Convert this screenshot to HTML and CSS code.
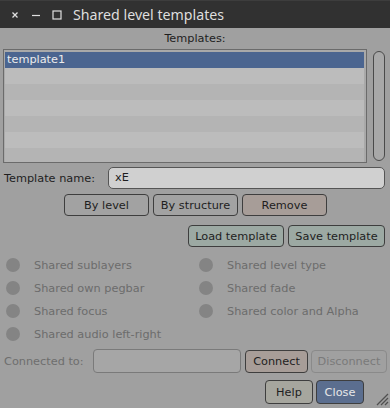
FILE: index.html
```html
<!DOCTYPE html>
<html>
<head>
<meta charset="utf-8">
<link rel="stylesheet" href="styles.css">
</head>
<body>
<div class="window">
  <div class="titlebar">
    <span class="tb-btn"><svg width="10" height="10" viewBox="0 0 10 10"><path d="M2.5 2.5 L7.5 7.5 M7.5 2.5 L2.5 7.5" stroke="#e0e0e0" stroke-width="1.3"/></svg></span>
    <span class="tb-btn"><svg width="10" height="10" viewBox="0 0 10 10"><path d="M1 5.5 H9" stroke="#e0e0e0" stroke-width="1.2"/></svg></span>
    <span class="tb-btn"><svg width="10" height="10" viewBox="0 0 10 10"><rect x="1" y="1" width="8" height="8" fill="none" stroke="#e0e0e0" stroke-width="1.2"/></svg></span>
    <span class="title">Shared level templates</span>
  </div>
  <div class="content">
    <div class="caption">Templates:</div>
    <div class="list-area">
      <div class="list">
        <div class="row sel">template1</div>
        <div class="row a"></div>
        <div class="row b"></div>
        <div class="row a"></div>
        <div class="row b"></div>
        <div class="row a"></div>
        <div class="row b"></div>
      </div>
      <div class="scroll"></div>
    </div>
    <div class="name-row">
      <span class="label">Template name:</span>
      <div class="input">xE</div>
    </div>
    <div class="btn-row center">
      <div class="btn w85">By level</div>
      <div class="btn w85">By structure</div>
      <div class="btn w85 red">Remove</div>
    </div>
    <div class="btn-row right">
      <div class="btn green w96">Load template</div>
      <div class="btn green w97">Save template</div>
    </div>
    <div class="checks">
      <div class="check"><span class="dot"></span>Shared sublayers</div>
      <div class="check"><span class="dot"></span>Shared level type</div>
      <div class="check"><span class="dot"></span>Shared own pegbar</div>
      <div class="check"><span class="dot"></span>Shared fade</div>
      <div class="check"><span class="dot"></span>Shared focus</div>
      <div class="check"><span class="dot"></span>Shared color and Alpha</div>
      <div class="check"><span class="dot"></span>Shared audio left-right</div>
    </div>
    <div class="connect-row">
      <span class="label dim">Connected to:</span>
      <div class="input dis"></div>
      <div class="btn red connect">Connect</div>
      <div class="btn disabled disconnect">Disconnect</div>
    </div>
    <div class="footer">
      <div class="btn help">Help</div>
      <div class="btn blue close">Close</div>
      <svg class="grip" width="16" height="16" viewBox="0 0 16 16"><path d="M15 4 L4 15 M15 8 L8 15 M15 12 L12 15" stroke="#505050" stroke-width="1.3"/></svg>
    </div>
  </div>
</div>
</body>
</html>
```
FILE: styles.css
```css
* { box-sizing: border-box; }
html, body { margin: 0; padding: 0; }
body {
  width: 390px;
  height: 408px;
  overflow: hidden;
  background: #a0a0a0;
  font-family: "DejaVu Sans", sans-serif;
  font-size: 11.3px;
  color: #1e1e1e;
}
.window { width: 390px; height: 408px; display: flex; flex-direction: column; }
.titlebar {
  height: 28px;
  background: #313131;
  border-top: 1px solid #3d3d3d;
  display: flex;
  align-items: center;
  padding-left: 10px;
}
.tb-btn { width: 10px; height: 10px; display: flex; margin-right: 11px; }
.tb-btn svg { display: block; }
.title {
  color: #dedede;
  font-family: "Noto Sans", sans-serif;
  font-size: 14.2px;
  line-height: 28px;
}
.content { display: flex; flex-direction: column; padding: 0; }
.caption {
  height: 20px;
  line-height: 20px;
  text-align: center;
  margin-top: 1px;
}
.list-area { display: flex; height: 114px; margin-left: 3px; }
.list {
  width: 364px;
  height: 114px;
  border: 1px solid #6b6b6b;
  background: #a9a9a9;
  padding: 2px 2px 0 1px;
  overflow: hidden;
}
.row { height: 16px; line-height: 16px; padding-left: 2px; }
.row.sel { background: #4b6590; color: #ececec; }
.row.a { background: #bcbcbc; }
.row.b { background: #b4b4b4; }
.scroll {
  width: 12px;
  height: 110px;
  margin-top: 2px;
  margin-left: 6px;
  border: 1px solid #4a4a4a;
  border-radius: 6px;
  background: #a8a8a8;
}
.name-row { display: flex; align-items: center; margin-top: 4px; height: 22px; padding-left: 4px; }
.label { width: 104px; }
.input {
  width: 277px;
  height: 22px;
  line-height: 20px;
  background: #d0d0d0;
  border: 1px solid #555;
  border-radius: 5px;
  padding-left: 6px;
}
.btn {
  height: 22px;
  border: 1px solid #3e3e3e;
  border-radius: 4px;
  background: #a2a2a2;
  display: flex;
  align-items: center;
  justify-content: center;
  white-space: nowrap;
}
.btn-row { display: flex; gap: 4px; }
.btn-row.center { justify-content: center; margin-top: 5px; padding-left: 1px; }
.btn-row.right { justify-content: flex-end; margin-top: 9px; padding-right: 5px; }
.w85 { width: 85px; }
.w96 { width: 96px; }
.w97 { width: 97px; }
.red { background: #a79d98; }
.green { background: #9ca9a3; }
.blue { background: #5b6e8f; color: #e8e8e8; }
.checks {
  display: grid;
  grid-template-columns: 193px 1fr;
  row-gap: 9px;
  margin-top: 11px;
  padding-left: 6px;
  color: #6c6c6c;
}
.check { display: flex; align-items: center; height: 14px; }
.dot {
  width: 14px;
  height: 14px;
  border-radius: 50%;
  background: #848484;
  margin-right: 14px;
}
.connect-row { display: flex; align-items: center; margin-top: 8px; padding-left: 4px; height: 24px; }
.label.dim { width: 89px; color: #6e6e6e; }
.input.dis { width: 148px; height: 24px; background: #a6a6a6; border-color: #7a7a7a; border-radius: 4px; }
.connect { width: 63px; margin-left: 4px; height: 23px; }
.disconnect { width: 76px; margin-left: 3px; height: 23px; border-color: #8a8a8a; color: #7a7a7a; background: #a0a0a0; }
.footer { display: flex; align-items: flex-end; margin-top: 7px; padding-left: 265px; height: 26px; }
.help { width: 48px; height: 24px; background: #a6a69e; margin-bottom: 2px; }
.close { width: 48px; height: 24px; margin-left: 3px; margin-bottom: 2px; }
.grip { margin-left: 9px; }
```
